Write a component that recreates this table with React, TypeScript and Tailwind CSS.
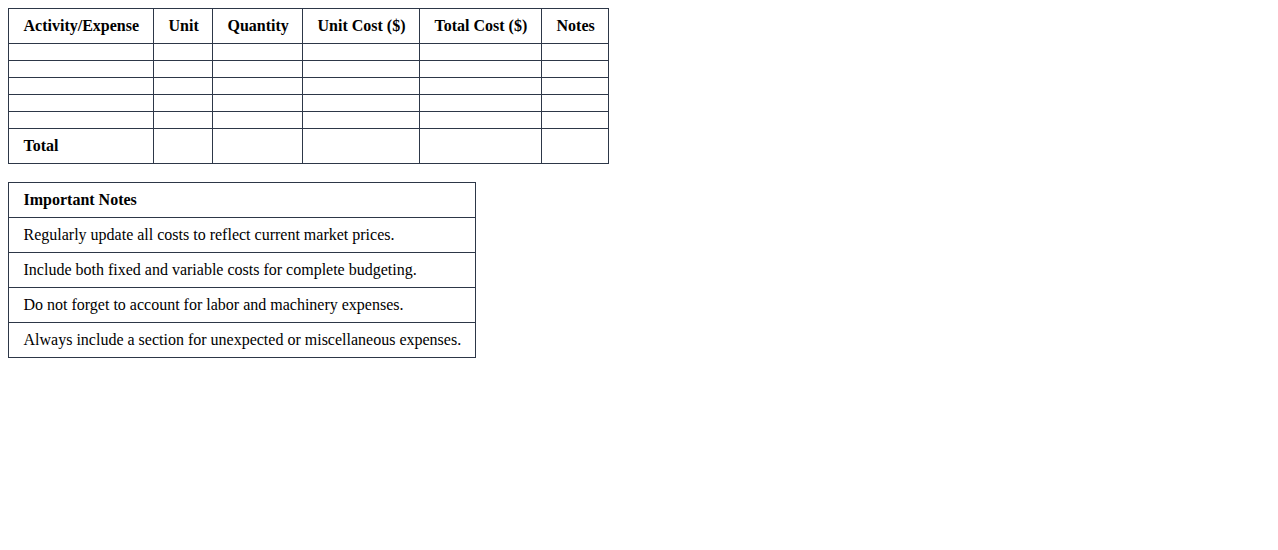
const headers = ["Activity/Expense", "Unit", "Quantity", "Unit Cost ($)", "Total Cost ($)", "Notes"];
const widths = ["w-[145px]", "w-[59px]", "w-[90px]", "w-[117px]", "w-[122px]", "w-[67px]"];

const notes = [
  "Regularly update all costs to reflect current market prices.",
  "Include both fixed and variable costs for complete budgeting.",
  "Do not forget to account for labor and machinery expenses.",
  "Always include a section for unexpected or miscellaneous expenses.",
];

const cell = "border border-[#2d3748] py-2 px-[14.5px]";

export default function App() {
  return (
    <div className="p-2 bg-white text-black font-['Liberation_Serif',serif] text-base leading-[normal]">
      {/* Budget table */}
      <table className="border-collapse table-fixed w-[601px] mb-[18px]">
        <colgroup>
          {widths.map((w, i) => (
            <col key={i} className={w} />
          ))}
        </colgroup>
        <thead>
          <tr>
            {headers.map((h) => (
              <th key={h} className={`${cell} font-bold text-center whitespace-nowrap`}>
                {h}
              </th>
            ))}
          </tr>
        </thead>
        <tbody>
          {[0, 1, 2, 3, 4].map((r) => (
            <tr key={r}>
              {headers.map((h) => (
                <td key={h} className={cell}></td>
              ))}
            </tr>
          ))}
          <tr>
            <td className={`${cell} font-bold text-left`}>Total</td>
            {headers.slice(1).map((h) => (
              <td key={h} className={cell}></td>
            ))}
          </tr>
        </tbody>
      </table>

      {/* Notes table */}
      <table className="border-collapse table-fixed w-[468px]">
        <thead>
          <tr>
            <th className={`${cell} font-bold text-left`}>Important Notes</th>
          </tr>
        </thead>
        <tbody>
          {notes.map((n) => (
            <tr key={n}>
              <td className={`${cell} whitespace-nowrap`}>{n}</td>
            </tr>
          ))}
        </tbody>
      </table>
    </div>
  );
}
